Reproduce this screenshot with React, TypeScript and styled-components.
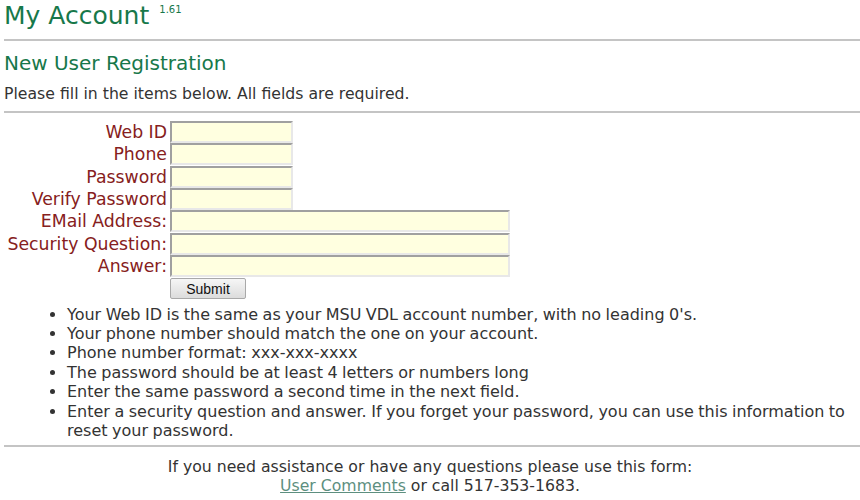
import React from "react";
import styled, { createGlobalStyle } from "styled-components";

const Global = createGlobalStyle`
  body {
    margin: 0;
    padding: 0 4px;
    background: #fff;
    font-family: "DejaVu Sans", Verdana, sans-serif;
    font-size: 16px;
    color: #333;
  }
`;

const Title = styled.h1`
  margin: 0;
  padding-top: 3px;
  font-weight: normal;
  font-size: 25px;
  line-height: 26px;
  color: #17784a;
  sup {
    font-size: 10px;
    line-height: 0;
    margin-left: 10px;
    vertical-align: 11px;
  }
`;

const Rule = styled.hr<{ $top: number; $bottom: number }>`
  border: 0;
  height: 0;
  border-top: 2px solid #c4c4c4;
  margin: ${(p) => p.$top}px -4px ${(p) => p.$bottom}px 0;
`;

const SubTitle = styled.h2`
  margin: 0;
  font-weight: normal;
  font-size: 20px;
  line-height: 24px;
  color: #17784a;
`;

const Intro = styled.p`
  margin: 10px 0 0;
  font-size: 15.7px;
  line-height: 18px;
`;

const Form = styled.form`
  display: grid;
  grid-template-columns: 163px auto;
  grid-auto-rows: 22.33px;
  column-gap: 3px;
  justify-content: start;
  align-items: start;
`;

const Label = styled.label`
  text-align: right;
  color: #862020;
  font-size: 17.3px;
  line-height: 22px;
  white-space: nowrap;
`;

const Input = styled.input<{ $wide?: boolean }>`
  box-sizing: border-box;
  width: ${(p) => (p.$wide ? 340 : 123)}px;
  height: 22px;
  margin: 0;
  background: #ffffe0;
  border: 2px solid #e8e8e8;
  border-top-color: #a0a0a0;
  border-left-color: #a0a0a0;
  padding: 0 2px;
  font-size: 13px;
`;

const Button = styled.button`
  box-sizing: border-box;
  width: 76px;
  height: 21px;
  margin-top: 1px;
  font-family: "Liberation Sans", Arial, sans-serif;
  font-size: 14px;
  color: #111;
  background: linear-gradient(#f6f6f6, #dcdcdc);
  border: 1px solid #a9a9a9;
  border-radius: 2px;
  padding: 0;
`;

const Notes = styled.ul`
  margin: 5px 0 0;
  padding-left: 63px;
  font-size: 16px;
  line-height: 19.4px;
  word-spacing: -0.6px;
  color: #333;
`;

const Footer = styled.div`
  text-align: center;
  font-size: 15.7px;
  line-height: 19px;
  padding-top: 10px;
  a {
    color: #5d8f7f;
  }
`;

const fields = [
  { label: "Web ID", wide: false, type: "text" },
  { label: "Phone", wide: false, type: "text" },
  { label: "Password", wide: false, type: "password" },
  { label: "Verify Password", wide: false, type: "password" },
  { label: "EMail Address:", wide: true, type: "text" },
  { label: "Security Question:", wide: true, type: "text" },
  { label: "Answer:", wide: true, type: "text" },
];

export default function App() {
  return (
    <>
      <Global />
      <Title>
        My Account<sup>1.61</sup>
      </Title>
      <Rule $top={10} $bottom={10} />
      <SubTitle>New User Registration</SubTitle>
      <Intro>Please fill in the items below. All fields are required.</Intro>
      <Rule $top={8} $bottom={8} />
      <Form onSubmit={(e) => e.preventDefault()}>
        {fields.map((f) => (
          <React.Fragment key={f.label}>
            <Label>{f.label}</Label>
            <Input $wide={f.wide} type={f.type} />
          </React.Fragment>
        ))}
        <span />
        <Button type="submit">Submit</Button>
      </Form>
      <Notes>
        <li>Your Web ID is the same as your MSU VDL account number, with no leading 0's.</li>
        <li>Your phone number should match the one on your account.</li>
        <li>Phone number format: xxx-xxx-xxxx</li>
        <li>The password should be at least 4 letters or numbers long</li>
        <li>Enter the same password a second time in the next field.</li>
        <li>
          Enter a security question and answer. If you forget your password, you can use this
          information to reset your password.
        </li>
      </Notes>
      <Rule $top={5} $bottom={0} />
      <Footer>
        If you need assistance or have any questions please use this form:
        <br />
        <a href="#">User Comments</a> or call 517-353-1683.
      </Footer>
    </>
  );
}
